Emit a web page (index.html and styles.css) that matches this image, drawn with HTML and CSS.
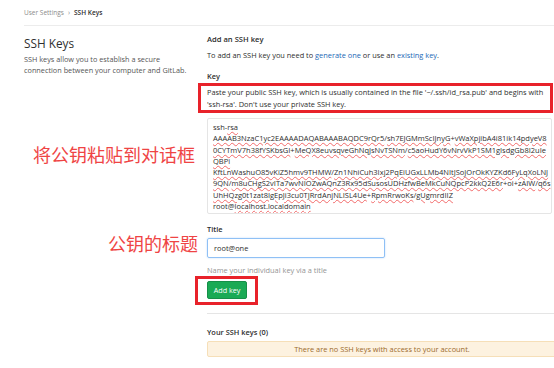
FILE: index.html
```html
<!DOCTYPE html>
<html lang="en">
<head>
    <meta charset="UTF-8">
    <title>SSH Keys · User Settings</title>
    <link rel="stylesheet" href="styles.css">
</head>
<body>
    <div class="crumbs">
        <span class="crumb">User Settings</span>
        <span class="crumb-sep">&rsaquo;</span>
        <span class="crumb current">SSH Keys</span>
    </div>

    <div class="layout">
        <div class="side">
            <h2 class="side-title">SSH Keys</h2>
            <p class="side-text">SSH keys allow you to establish a secure<br>connection between your computer and GitLab.</p>
            <div class="note note-key">将公钥粘贴到对话框</div>
            <div class="note note-title">公钥的标题</div>
        </div>

        <div class="main">
            <h4 class="section-title">Add an SSH key</h4>
            <p class="intro">To add an SSH key you need to <a href="#">generate one</a> or use an <a href="#">existing key</a>.</p>

            <label class="field-label">Key</label>
            <p class="key-help">Paste your public SSH key, which is usually contained in the file '~/.ssh/id_rsa.pub' and begins with 'ssh-rsa'. Don't use your private SSH key.</p>
            <div class="key-box">
                <div class="key-line">ssh-<span class="sp">rsa</span></div>
                <div class="key-line"><span class="sp">AAAAB3NzaC1yc2EAAAADAQABAAABAQDC9rQr5</span>/<span class="sp">sh7EJGMmScIJnyG</span>+<span class="sp">vWaXpjibA4i81ik14pdyeV8</span></div>
                <div class="key-line"><span class="sp">0CYTmV7h38fYSKbsGI</span>+<span class="sp">MeQX8euvsqveGhNqJsNvTSNm</span>/<span class="sp">c5aoHudY6vNrvVkP1SM1gIsdgGb8I2uIe</span></div>
                <div class="key-line"><span class="sp">QBPi</span></div>
                <div class="key-line"><span class="sp">KftLnWashuO85vKiZ5hmv9THMW</span>/<span class="sp">Zn1NhiCuh3Ixj2PqEiUGxLLMb4NItJSoJOrOkKYZKd6FyLqXoLNJ</span></div>
                <div class="key-line"><span class="sp">9QN</span>/<span class="sp">m8uCHgS2vITa7wvNIOZwAQnZ3Rx95dSusosUDHzfwBeMkCuNQpcP2kkQ2E6r</span>+oi+<span class="sp">zAIW</span>/<span class="sp">q6s</span></div>
                <div class="key-line"><span class="sp">UhHQzg0t1zat8IgEpJi3cu0TJRrdAnjNLISL4Ue</span>+<span class="sp">RpmRrwoKs</span>/<span class="sp">gUgmrdIIZ</span></div>
                <div class="key-line">root@<span class="sp">localhost.localdomain</span></div>
            </div>

            <label class="field-label title-label">Title</label>
            <div class="title-input">root@one</div>
            <p class="title-help">Name your individual key via a title</p>

            <div class="btn-mark">
                <button type="button" class="btn-add">Add key</button>
            </div>

            <hr class="divider">

            <h5 class="keys-title">Your SSH keys (0)</h5>
            <div class="empty-keys">There are no SSH keys with access to your account.</div>
        </div>
    </div>
</body>
</html>
```

FILE: styles.css
```css
body {
    font-family: "Open Sans", "Noto Sans", sans-serif;
    font-size: 7.4px;
    color: #2e2e2e;
    background: white;
    margin: 0;
    width: 554px;
    height: 368px;
    overflow: hidden;
}
p, h2, h4, h5 {
    margin: 0;
}
a {
    color: #1b69b6;
    text-decoration: none;
}

/* breadcrumb */
.crumbs {
    margin-left: 24px;
    height: 25px;
    border-bottom: 1px solid #ececec;
    display: flex;
    align-items: center;
    gap: 4px;
    color: #8c8c8c;
    font-size: 6.5px;
}
.crumb-sep {
    font-size: 7px;
}
.current {
    color: #2e2e2e;
    font-weight: 600;
}

.layout {
    display: grid;
    grid-template-columns: 183px 350px;
    padding-left: 24px;
}

/* left column */
.side {
    padding-top: 9px;
}
.side-title {
    font-size: 11.8px;
    font-weight: 400;
    line-height: 16px;
    margin-bottom: 3px;
}
.side-text {
    white-space: nowrap;
    font-size: 7.3px;
    line-height: 11px;
    color: #555;
}
.note {
    font-family: "Noto Sans CJK SC", sans-serif;
    font-size: 18px;
    line-height: 18px;
    color: #ef4444;
    text-align: right;
}
.note-key {
    margin-top: 69px;
    margin-right: 12px;
}
.note-title {
    margin-top: 71px;
    margin-right: 9px;
}

/* right column */
.main {
    padding-top: 7px;
}
.section-title {
    font-size: 7.6px;
    font-weight: 600;
    line-height: 12px;
}
.intro {
    line-height: 12px;
    margin-top: 4px;
}
.field-label {
    display: block;
    font-weight: 600;
    line-height: 12px;
    margin-top: 9px;
}
.key-help {
    line-height: 12px;
    margin-top: 1px;
    margin-left: -9px;
    width: 340px;
    border: 3px solid #e8222a;
    padding: 0 3px 0 6px;
}
.key-box {
    margin-top: 5px;
    border: 1px solid #e5e5e5;
    border-radius: 2px;
    padding: 3px 0 0 5px;
    box-sizing: border-box;
    height: 96px;
    width: 345px;
    font-size: 7.5px;
    line-height: 11.3px;
    overflow: hidden;
}
.key-line {
    white-space: nowrap;
}
.sp {
    text-decoration: underline wavy #f26a6a;
    text-decoration-thickness: 0.5px;
    text-underline-offset: 1px;
}
.title-label {
    margin-top: 9px;
}
.title-input {
    margin-top: 3px;
    width: 178px;
    height: 20px;
    box-sizing: border-box;
    border: 1px solid #8fc0f5;
    box-shadow: 0 0 2px #b9d9fb;
    border-radius: 2px;
    padding-left: 6px;
    line-height: 18px;
}
.title-help {
    margin-top: 6px;
    line-height: 12px;
    color: #959595;
}
.btn-mark {
    display: inline-block;
    margin-left: -12px;
    border: 3px solid #e8222a;
    padding: 2px 8px 3px 9px;
}
.btn-add {
    display: block;
    width: 40px;
    height: 18px;
    padding: 0;
    border: 1px solid #168f48;
    border-radius: 2px;
    background: #1aaa55;
    color: white;
    font-family: inherit;
    font-size: 7.2px;
}
.divider {
    margin: 8px 0 0 0;
    border: 0;
    border-top: 1px solid #e5e5e5;
}
.keys-title {
    margin-top: 12px;
    font-size: 7.4px;
    font-weight: 600;
    line-height: 12px;
}
.empty-keys {
    margin-top: 3px;
    height: 16px;
    box-sizing: border-box;
    border: 1px solid #f6dfb8;
    border-radius: 2px;
    background: #fdf2e0;
    color: #9c6a2c;
    text-align: center;
    line-height: 14px;
}
```
